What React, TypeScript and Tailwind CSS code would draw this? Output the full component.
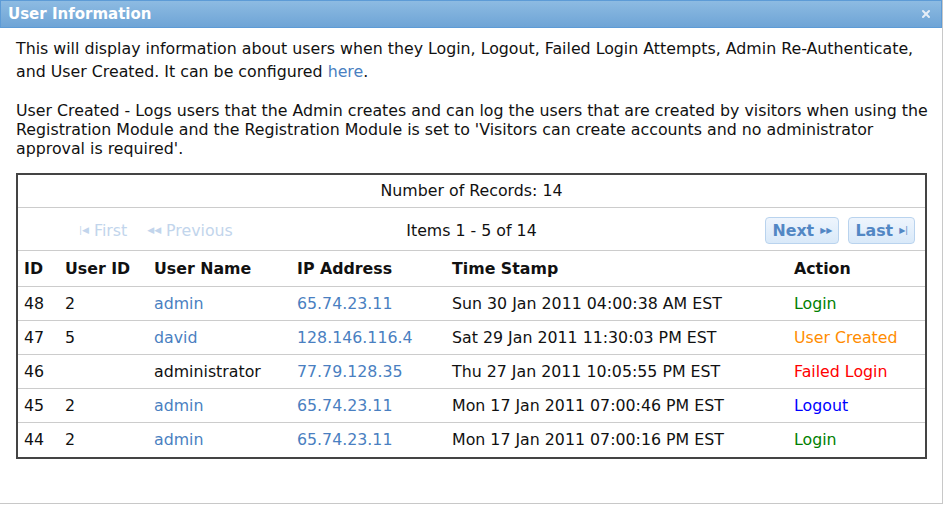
import { X } from 'lucide-react';

interface LogRow {
  id: number;
  userId: string;
  userName: string;
  isLink: boolean;
  ip: string;
  stamp: string;
  action: string;
  actionClass: string;
}

const rows: LogRow[] = [
  { id: 48, userId: '2', userName: 'admin', isLink: true, ip: '65.74.23.11', stamp: 'Sun 30 Jan 2011 04:00:38 AM EST', action: 'Login', actionClass: 'text-[#008000]' },
  { id: 47, userId: '5', userName: 'david', isLink: true, ip: '128.146.116.4', stamp: 'Sat 29 Jan 2011 11:30:03 PM EST', action: 'User Created', actionClass: 'text-[#ff8c00]' },
  { id: 46, userId: '', userName: 'administrator', isLink: false, ip: '77.79.128.35', stamp: 'Thu 27 Jan 2011 10:05:55 PM EST', action: 'Failed Login', actionClass: 'text-[#ff0000]' },
  { id: 45, userId: '2', userName: 'admin', isLink: true, ip: '65.74.23.11', stamp: 'Mon 17 Jan 2011 07:00:46 PM EST', action: 'Logout', actionClass: 'text-[#0000ff]' },
  { id: 44, userId: '2', userName: 'admin', isLink: true, ip: '65.74.23.11', stamp: 'Mon 17 Jan 2011 07:00:16 PM EST', action: 'Login', actionClass: 'text-[#008000]' },
];

const cols = 'grid grid-cols-[41px_89px_143px_155px_342px_1fr]';

export default function App() {
  return (
    <div className="w-[944px] h-[505px] bg-white font-['DejaVu_Sans',sans-serif] text-[15.8px] text-[#111]">
      <div className="w-[943px] h-[504px] border-r border-b border-[#c8c8c8] flex flex-col">
        {/* Title bar */}
        <div className="h-[28px] flex items-center justify-between pl-[7px] pr-2 bg-gradient-to-b from-[#8dbbe2] to-[#6ea4d6] border border-[#5d9bd6] text-white">
          <span className="font-bold text-[15px] leading-none">User Information</span>
          <X size={12} strokeWidth={4} className="text-[#e6eef7] mr-[1px]" />
        </div>

        <div className="px-4 pt-[9px]">
          <p className="leading-[23px] whitespace-nowrap">
            This will display information about users when they Login, Logout, Failed Login Attempts, Admin Re-Authenticate,
            <br />
            and User Created. It can be configured <a className="text-[#4a7fc1]">here</a>.
          </p>
          <p className="mt-[18px] leading-[19px] whitespace-nowrap">
            User Created - Logs users that the Admin creates and can log the users that are created by visitors when using the
            <br />
            Registration Module and the Registration Module is set to 'Visitors can create accounts and no administrator
            <br />
            approval is required'.
          </p>

          <div className="mt-[15px] w-[911px] border-2 border-[#444] bg-white">
            <div className="h-[33px] flex items-center justify-center border-b border-[#ccc]">
              Number of Records: 14
            </div>

            <div className="h-[43px] grid grid-cols-[1fr_auto_1fr] items-center border-b border-[#ccc] pl-[10px] pr-[10px] pt-[3px]">
              <div className="flex items-center gap-[20px] pl-[51px] text-[#c2d5ec]">
                <span className="flex items-center gap-[5px]">
                  <span className="text-[9px]">|◀</span>First
                </span>
                <span className="flex items-center gap-[5px]">
                  <span className="text-[9px]">◀◀</span>Previous
                </span>
              </div>
              <div>Items 1 - 5 of 14</div>
              <div className="flex justify-end gap-[9px]">
                <button className="h-[27px] px-[6px] flex items-center gap-[6px] rounded-[4px] border border-[#b9d3ee] bg-gradient-to-b from-[#eef5fd] to-[#d9e9f9] text-[#5287c4] font-bold">
                  Next <span className="text-[8px] font-normal">▶▶</span>
                </button>
                <button className="h-[27px] px-[6px] flex items-center gap-[6px] rounded-[4px] border border-[#b9d3ee] bg-gradient-to-b from-[#eef5fd] to-[#d9e9f9] text-[#5287c4] font-bold">
                  Last <span className="text-[8px] font-normal">▶|</span>
                </button>
              </div>
            </div>

            <div className={`${cols} h-[36px] items-center font-bold border-b border-[#ccc]`}>
              <div className="pl-[6px]">ID</div>
              <div className="pl-[6px]">User ID</div>
              <div className="pl-[6px]">User Name</div>
              <div className="pl-[6px]">IP Address</div>
              <div className="pl-[6px]">Time Stamp</div>
              <div className="pl-[6px]">Action</div>
            </div>

            {rows.map((r, i) => (
              <div
                key={r.id}
                className={`${cols} h-[34px] items-center ${i < rows.length - 1 ? 'border-b border-[#ccc]' : ''}`}
              >
                <div className="pl-[6px]">{r.id}</div>
                <div className="pl-[6px]">{r.userId}</div>
                <div className={`pl-[6px] ${r.isLink ? 'text-[#4a7fc1]' : ''}`}>{r.userName}</div>
                <div className="pl-[6px] text-[#4a7fc1]">{r.ip}</div>
                <div className="pl-[6px]">{r.stamp}</div>
                <div className={`pl-[6px] ${r.actionClass}`}>{r.action}</div>
              </div>
            ))}
          </div>
        </div>
      </div>
    </div>
  );
}
